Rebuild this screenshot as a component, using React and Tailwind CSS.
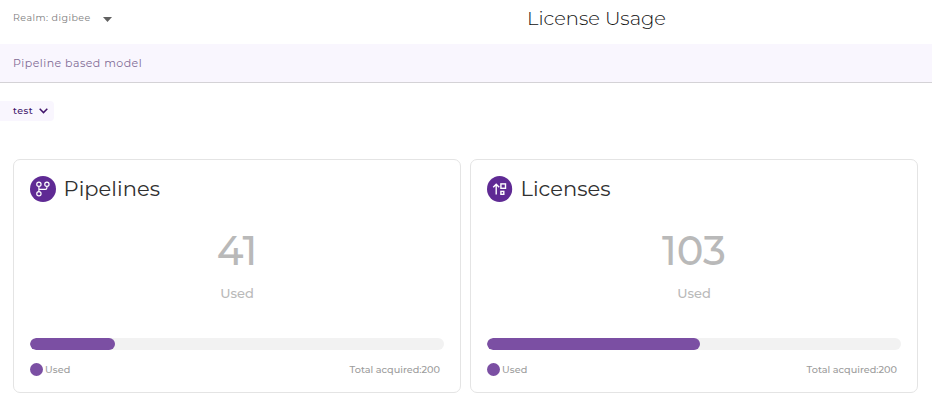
import React from "react";

function BranchIcon() {
  return (
    <svg width="26" height="26" viewBox="0 0 26 26" fill="none" stroke="#fff" strokeWidth="1.2">
      <circle cx="13" cy="13" r="13" fill="#5f2a94" stroke="none" />
      <circle cx="8.9" cy="8.2" r="2.15" />
      <circle cx="16.9" cy="8.2" r="2.15" />
      <circle cx="8.9" cy="17.8" r="2.15" />
      <path d="M8.9 10.3v5.3M16.9 10.3v1.5q0 1.6-1.6 1.6H8.9" />
    </svg>
  );
}

function LicenseIcon() {
  return (
    <svg width="26" height="26" viewBox="0 0 26 26" fill="none" stroke="#fff" strokeWidth="1.4">
      <ellipse cx="12.6" cy="13" rx="12.6" ry="13" fill="#5f2a94" stroke="none" />
      <path d="M9.2 18.6V8.4M6.2 11.3l3-3 3 3" />
      <rect x="13.9" y="7.9" width="4.6" height="4.4" />
      <rect x="13.9" y="15.4" width="2.9" height="2.9" />
    </svg>
  );
}

function UsageCard({ icon, title, value, percent }) {
  return (
    <section className="flex h-[234px] w-[448px] flex-col rounded-[7px] border border-[#e4e4e4] px-4 pt-4">
      <header className="flex h-[26px] items-center">
        {icon}
        <h2 className="ml-[7.5px] text-[21px] leading-[26px] tracking-[0.05px] text-[#303030]">{title}</h2>
      </header>
      <div className="mt-[28px] text-center text-[40px] leading-[42px] font-medium text-[#b9b9b9]">{value}</div>
      <div className="mt-[13px] text-center text-[13px] leading-4 font-medium text-[#b9b9b9]">Used</div>
      <div className="mt-[37px] h-3 w-full overflow-hidden rounded-full bg-[#f2f2f2]">
        <div className="h-full rounded-full bg-[#7b4fa3]" style={{ width: `${percent}%` }} />
      </div>
      <footer className="mt-[13px] flex h-[13px] items-center text-[9.7px] leading-[13px] font-medium text-[#9c9c9c]">
        <span className="size-[13px] rounded-full bg-[#7b4fa3]" />
        <span className="ml-[2px] tracking-[0.1px]">Used</span>
        <span className="mr-1 ml-auto">Total acquired:200</span>
      </footer>
    </section>
  );
}

export default function App() {
  return (
    <main className="h-[406px] w-[932px] overflow-hidden bg-white font-['Montserrat','Inter',sans-serif]">
      <div className="flex h-[44px] items-start">
        <div className="flex w-[527px] items-center pt-[11px] pl-[13px]">
          <span className="text-[9.5px] leading-[14px] tracking-[0.47px] text-[#7c7c7c]">Realm: digibee</span>
          <svg className="mt-[3px] ml-[12px]" width="9" height="5" viewBox="0 0 9 5">
            <path d="M0 0h9L4.5 5z" fill="#616161" />
          </svg>
        </div>
        <h1 className="pt-[6px] text-[19.5px] leading-6 font-light text-[#101010]">License Usage</h1>
      </div>
      <div className="flex h-[39px] items-center border-b border-[#d4d2d6] bg-[#f9f6fe] pl-[13px]">
        <span className="text-[11px] leading-4 tracking-[0.47px] text-[#806b95]">Pipeline based model</span>
      </div>
      <button className="mt-[18px] flex h-5 w-[54px] items-center rounded-r-sm bg-[#f9f6fe] pl-[13px] text-[9.5px] font-medium tracking-[0.5px] text-[#42156b]">
        <span className="mt-px">test</span>
        <svg className="ml-[6px]" width="9" height="6" viewBox="0 0 9 6" fill="none" stroke="#42156b" strokeWidth="1.5">
          <path d="M.7.8l3.8 3.8L8.3.8" />
        </svg>
      </button>
      <div className="mt-[38px] ml-[13px] flex gap-[9px]">
        <UsageCard icon={<BranchIcon />} title="Pipelines" value="41" percent={20.5} />
        <UsageCard icon={<LicenseIcon />} title="Licenses" value="103" percent={51.5} />
      </div>
    </main>
  );
}
